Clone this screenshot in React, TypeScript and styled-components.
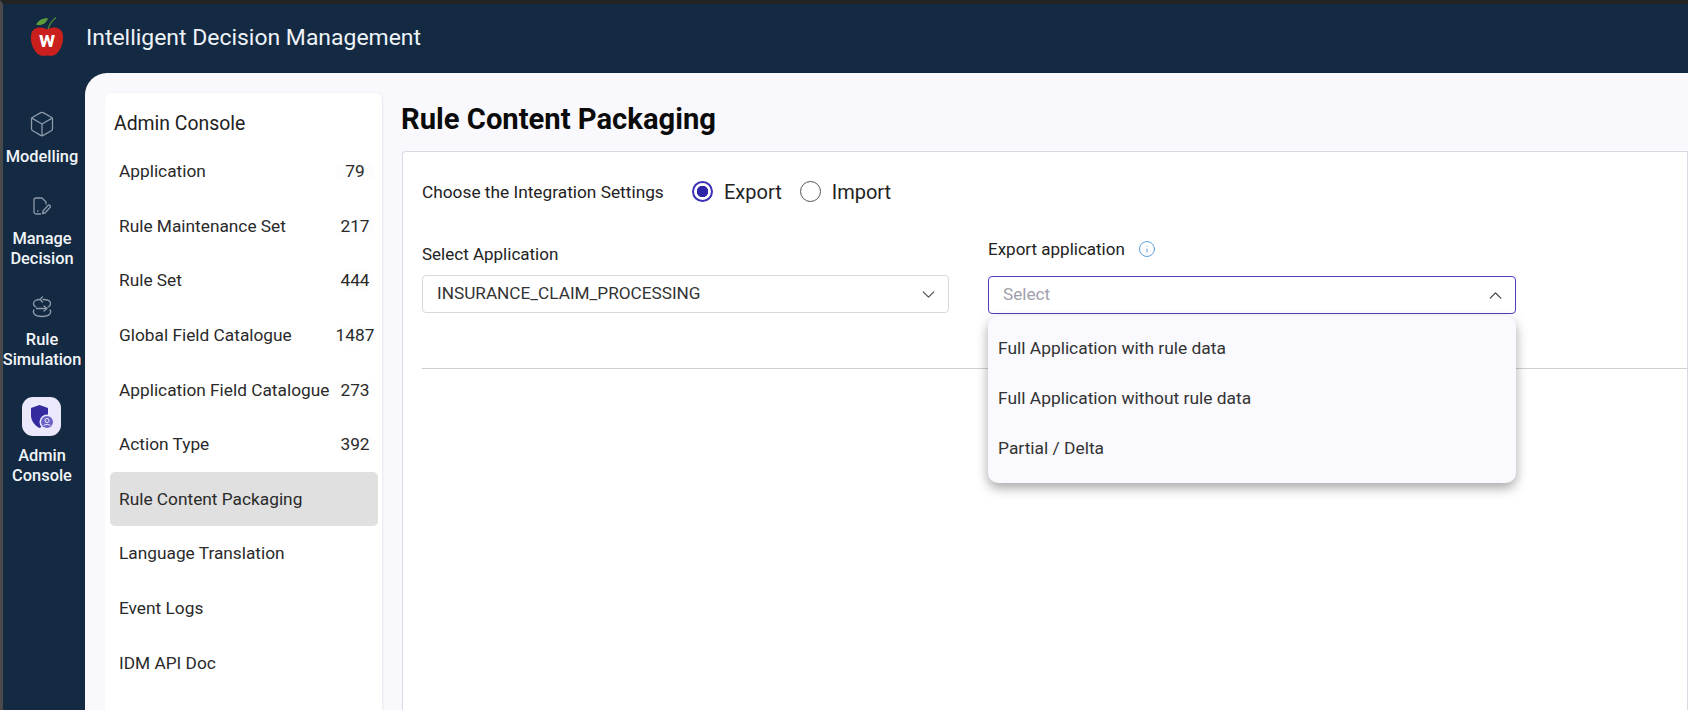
import React from "react";
import styled, { createGlobalStyle } from "styled-components";
import { Box, ChevronDown, ChevronUp, Info } from "lucide-react";

const GlobalStyle = createGlobalStyle`
  html, body, #root {
    margin: 0;
    height: 100%;
  }
  body {
    overflow: hidden;
    font-family: Roboto, "Liberation Sans", sans-serif;
    background: #132a42;
  }
  * {
    box-sizing: border-box;
  }
`;

const menuItems = [
  { label: "Application", count: "79" },
  { label: "Rule Maintenance Set", count: "217" },
  { label: "Rule Set", count: "444" },
  { label: "Global Field Catalogue", count: "1487" },
  { label: "Application Field Catalogue", count: "273" },
  { label: "Action Type", count: "392" },
  { label: "Rule Content Packaging", active: true },
  { label: "Language Translation" },
  { label: "Event Logs" },
  { label: "IDM API Doc" },
];

const exportOptions = [
  "Full Application with rule data",
  "Full Application without rule data",
  "Partial / Delta",
];

const AppleLogo = () => (
  <svg width="34" height="40" viewBox="0 0 34 40">
    <path
      d="M17 12.5C12 9.5 4 9.5 1.5 16C-0.5 23 2.5 33 8.5 37.5C11.5 39.5 14 38.5 17 38.5C20 38.5 22.5 39.5 25.5 37.5C31.5 33 34.5 23 32.5 16C30 9.5 22 9.5 17 12.5Z"
      fill="#c9201d"
    />
    <path d="M18 12C19.5 7.5 22 3.5 26 0.5" fill="none" stroke="#4f8a35" strokeWidth="1.3" />
    <path d="M6 7.5C9 2.5 14 0.5 18 1.5C16.5 6 11 9.5 6 7.5Z" fill="#5d9e3c" />
    <text x="17" y="30" textAnchor="middle" fill="#fff" fontFamily="Roboto" fontWeight="700" fontSize="22">
      w
    </text>
  </svg>
);

const ManageIcon = () => (
  <svg width="18" height="18" viewBox="0 0 18 18" fill="none" stroke="#8c9aaa" strokeWidth="1.3" strokeLinecap="round" strokeLinejoin="round">
    <path d="M7.5 17H3a2 2 0 0 1-2-2V3a2 2 0 0 1 2-2h6l4 4v2" />
    <path d="M9.5 16.5l.5-2.5 5-5.5a1.4 1.4 0 0 1 2 2L12 16z" />
    <path d="M4.5 14h.5" />
  </svg>
);

const SimulationIcon = () => (
  <svg width="20" height="22" viewBox="0 0 20 22" fill="none" stroke="#8c9aaa" strokeWidth="1.3" strokeLinecap="round" strokeLinejoin="round">
    <path d="M8 3.5C3.5 3.5 1.5 5.5 1.5 7.5C1.5 9 2.5 10.5 4 11" />
    <path d="M11 3.5C16 3.5 18.5 5.5 18.5 7.5C18.5 9.5 17.5 10.5 16 11" />
    <path d="M10.5 1L8 3.5L10.5 6" />
    <path d="M4.5 12.5H14.5" />
    <path d="M12 10L15 12.5L12 15" />
    <path d="M2 14C0.5 16 1.5 20.5 10 20.5C18.5 20.5 19.5 16 18 14" />
  </svg>
);

const AdminIcon = () => (
  <svg width="26" height="26" viewBox="0 0 26 26">
    <path d="M10.5 1L19 4V11C19 17 15.5 21.5 10.5 24C5.5 21.5 2 17 2 11V4Z" fill="#34299f" />
    <circle cx="18" cy="18" r="7.5" fill="#ebe8fb" />
    <circle cx="18" cy="18" r="6" fill="#6c63c4" />
    <circle cx="18" cy="16.5" r="2" fill="none" stroke="#ebe8fb" strokeWidth="1" />
    <path d="M14.8 22C15.3 19.8 20.7 19.8 21.2 22" fill="none" stroke="#ebe8fb" strokeWidth="1" />
  </svg>
);

export default function App() {
  return (
    <Page>
      <GlobalStyle />
      <Header>
        <LogoSlot>
          <AppleLogo />
        </LogoSlot>
        <ProductName>Intelligent Decision Management</ProductName>
      </Header>
      <Body>
        <Rail>
          <RailItem>
            <RailIcon>
              <Box size={28} strokeWidth={1.1} color="#8c9aaa" />
            </RailIcon>
            <RailLabel>Modelling</RailLabel>
          </RailItem>
          <RailItem>
            <RailIcon>
              <ManageIcon />
            </RailIcon>
            <RailLabel>
              Manage
              <br />
              Decision
            </RailLabel>
          </RailItem>
          <RailItem>
            <RailIcon>
              <SimulationIcon />
            </RailIcon>
            <RailLabel>
              Rule
              <br />
              Simulation
            </RailLabel>
          </RailItem>
          <RailItem>
            <RailTile>
              <AdminIcon />
            </RailTile>
            <RailLabel>
              Admin
              <br />
              Console
            </RailLabel>
          </RailItem>
        </Rail>
        <Panel>
          <SideCard>
            <SideTitle>Admin Console</SideTitle>
            <Menu>
              {menuItems.map((item) => (
                <MenuRow key={item.label} $active={item.active}>
                  <span>{item.label}</span>
                  {item.count && <Count>{item.count}</Count>}
                </MenuRow>
              ))}
            </Menu>
          </SideCard>
          <Main>
            <Heading>Rule Content Packaging</Heading>
            <Card>
              <SettingsRow>
                <SettingsLabel>Choose the Integration Settings</SettingsLabel>
                <RadioOption>
                  <Radio $checked />
                  Export
                </RadioOption>
                <RadioOption>
                  <Radio />
                  Import
                </RadioOption>
              </SettingsRow>
              <FieldsRow>
                <ApplicationField>
                  <FieldLabel $gap={10.5}>Select Application</FieldLabel>
                  <SelectBox>
                    <SelectValue>INSURANCE_CLAIM_PROCESSING</SelectValue>
                    <ChevronDown size={21} strokeWidth={1.5} color="#555" />
                  </SelectBox>
                </ApplicationField>
                <ExportField>
                  <FieldLabel $gap={16.5}>
                    Export application
                    <Info size={18} strokeWidth={1.3} color="#5b9bdc" />
                  </FieldLabel>
                  <SelectBox $open>
                    <SelectValue $placeholder>Select</SelectValue>
                    <ChevronUp size={21} strokeWidth={1.5} color="#444" />
                  </SelectBox>
                  <Dropdown>
                    {exportOptions.map((option) => (
                      <DropdownOption key={option}>{option}</DropdownOption>
                    ))}
                  </Dropdown>
                </ExportField>
              </FieldsRow>
              <Divider />
            </Card>
          </Main>
        </Panel>
      </Body>
    </Page>
  );
}

const Page = styled.div`
  width: 1688px;
  height: 710px;
  display: flex;
  flex-direction: column;
  overflow: hidden;
  background: #132a42;
  border-top: 4px solid #242424;
  border-left: 3px solid #4a4a4a;
`;

const Header = styled.header`
  height: 69px;
  flex: none;
  display: flex;
  align-items: flex-start;
  padding: 13px 0 0 27px;
`;

const LogoSlot = styled.div`
  width: 56px;
  flex: none;
`;

const ProductName = styled.div`
  margin-top: 7px;
  color: #eef3f8;
  font-size: 22.95px;
  line-height: 28px;
`;

const Body = styled.div`
  flex: 1;
  min-height: 0;
  display: flex;
`;

const Rail = styled.nav`
  width: 82px;
  flex: none;
  display: flex;
  flex-direction: column;
  align-items: center;
  padding: 39px 4px 0 0;
`;

const RailItem = styled.div`
  display: flex;
  flex-direction: column;
  align-items: center;
  margin-bottom: 26.7px;
`;

const RailIcon = styled.div`
  height: 24px;
  margin-bottom: 11px;
  display: flex;
  align-items: center;
  justify-content: center;
`;

const RailTile = styled.div`
  width: 39px;
  height: 39px;
  margin-bottom: 10px;
  border-radius: 11px;
  background: #ebe8fb;
  display: flex;
  align-items: center;
  justify-content: center;
`;

const RailLabel = styled.div`
  color: #f2f5f8;
  font-size: 16.4px;
  font-weight: 500;
  line-height: 20px;
  text-align: center;
  white-space: nowrap;
`;

const Panel = styled.div`
  flex: 1;
  min-width: 0;
  display: flex;
  gap: 20px;
  padding: 20px 0 0 20px;
  background: #f8f8fd;
  border-top-left-radius: 22px;
`;

const SideCard = styled.aside`
  width: 277px;
  flex: none;
  padding: 20px 4px 0 5px;
  background: #fff;
  border-top-left-radius: 6px;
  border-top-right-radius: 6px;
  box-shadow: 1px 0 2px rgba(60, 60, 90, 0.08);
`;

const SideTitle = styled.div`
  height: 22px;
  padding-left: 4px;
  color: #222;
  font-size: 19.4px;
  line-height: 22px;
`;

const Menu = styled.div`
  margin-top: 9px;
`;

const MenuRow = styled.div<{ $active?: boolean }>`
  height: 54.6px;
  display: flex;
  align-items: center;
  justify-content: space-between;
  padding: 0 3px 0 9px;
  border-radius: 5px;
  background: ${(p) => (p.$active ? "#e0e0e0" : "transparent")};
  color: #2a2a2a;
  font-size: 17.3px;
  white-space: nowrap;
`;

const Count = styled.span`
  min-width: 40px;
  text-align: center;
  border-radius: 12px;
  background: #fdfdfe;
`;

const Main = styled.main`
  flex: 1;
  min-width: 0;
  display: flex;
  flex-direction: column;
`;

const Heading = styled.h1`
  margin: 0 0 0 -1px;
  height: 58px;
  padding-top: 8px;
  color: #0b0b0b;
  font-size: 29.2px;
  font-weight: 700;
  line-height: 36px;
`;

const Card = styled.section`
  flex: 1;
  padding: 24.5px 0 0 19px;
  background: #fff;
  border: 1px solid #d9d9e3;
  border-bottom: none;
  border-top-left-radius: 4px;
`;

const SettingsRow = styled.div`
  height: 30px;
  display: flex;
  align-items: center;
`;

const SettingsLabel = styled.div`
  width: 270px;
  color: #222;
  font-size: 17.3px;
`;

const RadioOption = styled.label`
  display: flex;
  align-items: center;
  gap: 11px;
  margin-right: 18px;
  color: #222;
  font-size: 20px;
`;

const Radio = styled.span<{ $checked?: boolean }>`
  width: 21px;
  height: 21px;
  border-radius: 50%;
  border: ${(p) => (p.$checked ? "2px solid #3a2fb5" : "1.5px solid #555")};
  background: ${(p) => (p.$checked ? "radial-gradient(circle, #2f25a8 0 5.5px, #fff 6px)" : "#fff")};
`;

const FieldsRow = styled.div`
  margin-top: 32px;
  display: flex;
  align-items: flex-end;
  gap: 39px;
`;

const ApplicationField = styled.div`
  width: 527px;
`;

const ExportField = styled.div`
  position: relative;
  width: 528px;
  margin-bottom: -1px;
`;

const FieldLabel = styled.div<{ $gap: number }>`
  height: 21px;
  margin-bottom: ${(p) => p.$gap}px;
  display: flex;
  align-items: center;
  gap: 13px;
  color: #222;
  font-size: 17px;
`;

const SelectBox = styled.div<{ $open?: boolean }>`
  height: 38px;
  display: flex;
  align-items: center;
  justify-content: space-between;
  padding: 0 9px 0 14px;
  background: #fff;
  border: ${(p) => (p.$open ? "1.5px solid #4a3fc0" : "1px solid #d8d8df")};
  border-radius: 4px;
`;

const SelectValue = styled.span<{ $placeholder?: boolean }>`
  padding-bottom: 2px;
  color: ${(p) => (p.$placeholder ? "#a0a0ac" : "#333")};
  font-size: 17.2px;
`;

const Dropdown = styled.div`
  position: absolute;
  z-index: 2;
  top: 77.5px;
  left: 0;
  right: 0;
  height: 167px;
  padding-top: 7px;
  background: #f9f9fe;
  border-radius: 10px;
  box-shadow: 0 5px 12px rgba(0, 0, 0, 0.35);
`;

const DropdownOption = styled.div`
  height: 50px;
  display: flex;
  align-items: center;
  padding-left: 10px;
  color: #333;
  font-size: 17.4px;
`;

const Divider = styled.hr`
  margin: 55px 0 0 0;
  border: none;
  border-top: 1px solid #cfcfcf;
`;
